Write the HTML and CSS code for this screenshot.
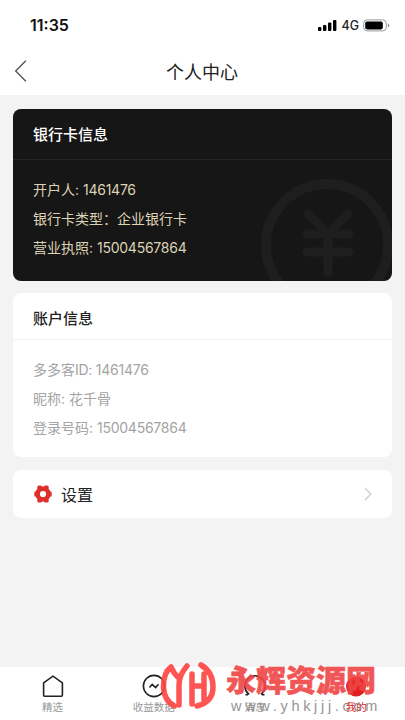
FILE: index.html
```html
<!DOCTYPE html>
<html lang="zh-CN">
<head>
<meta charset="utf-8">
<title>个人中心</title>
<link rel="stylesheet" href="styles.css">
</head>
<body>
<div class="app">
  <header class="top">
    <div class="status">
      <span class="time">11:35</span>
      <span class="indicators">
        <svg width="20" height="13" viewBox="0 0 20 13"><rect x="1" y="8" width="3.4" height="4" rx="1"/><rect x="6" y="6" width="3.4" height="6" rx="1"/><rect x="11" y="3.5" width="3.4" height="8.5" rx="1"/><rect x="16" y="1" width="3.4" height="11" rx="1"/></svg>
        <span class="net">4G</span>
        <svg width="27" height="13" viewBox="0 0 27 13"><rect x=".7" y=".9" width="22.6" height="11" rx="3.4" fill="none" stroke="#999"/><rect x="2.2" y="2.4" width="17.6" height="8" rx="1.8"/><path d="M24.8 4.6q1.5.3 1.5 1.8t-1.5 1.8z" fill="#999"/></svg>
      </span>
    </div>
    <nav class="nav">
      <svg class="back" width="14" height="22" viewBox="0 0 14 22"><path d="M11.800.8 1.700 11l10.100 10.200" fill="none" stroke="#555" stroke-width="1.400"/></svg>
      <h1>个人中心</h1>
    </nav>
  </header>
  <main>
    <section class="card bank">
      <svg class="yen" width="132" height="102" viewBox="0 0 132 102"><g fill="none" stroke="#1e1e1e" stroke-linecap="round"><circle cx="66" cy="66" r="61" stroke-width="10"/><path d="M47 35 67 54 87 35M46 55h42M46 73h42M67 55v39" stroke-width="9"/></g></svg>
      <h2>银行卡信息</h2>
      <div class="rows">
        <p>开户人: <b>1461476</b></p>
        <p>银行卡类型：企业银行卡</p>
        <p>营业执照: <b>15004567864</b></p>
      </div>
    </section>
    <section class="card account">
      <h2>账户信息</h2>
      <div class="rows">
        <p>多多客<b>ID: 1461476</b></p>
        <p>昵称: 花千骨</p>
        <p>登录号码: <b>15004567864</b></p>
      </div>
    </section>
    <section class="card setting">
      <svg width="18" height="18" viewBox="0 0 18 18"><path d="M9 2.600 14.600 5.800v6.400L9 15.400l-5.600-3.200V5.800z" fill="#dc3029" stroke="#dc3029" stroke-width="2.500"/><g fill="#dc3029"><rect x="3.300" y=".4" width="4.800" height="5" rx="1.500"/><rect x="9.900" y=".4" width="4.800" height="5" rx="1.500"/><rect x="3.300" y="12.600" width="4.800" height="5" rx="1.500"/><rect x="9.900" y="12.600" width="4.800" height="5" rx="1.500"/><rect x=".3" y="6.300" width="5" height="5.400" rx="1.500"/><rect x="12.700" y="6.300" width="5" height="5.400" rx="1.500"/></g><circle cx="9" cy="9" r="3.100" fill="#fff"/></svg>
      <span>设置</span>
      <svg class="go" width="8" height="14" viewBox="0 0 8 14"><path d="m1 1 5.800 6L1 13" fill="none" stroke="#d0d0d0" stroke-width="1.500"/></svg>
    </section>
  </main>
  <footer class="tabs">
    <div class="tab"><svg width="24" height="24" viewBox="0 0 24 24"><path d="M2.600 8.800 12 2.200l9.400 6.600v12.400q0 1-1 1H3.600q-1 0-1-1z"/></svg><span>精选</span></div>
    <div class="tab"><svg width="24" height="24" viewBox="0 0 24 24"><circle cx="12" cy="12" r="10.600"/><path d="m7.500 13.500 2.700-3.200 3.400 3.200 2.900-3.200"/></svg><span>收益数据</span></div>
    <div class="tab"><svg width="24" height="24" viewBox="0 0 24 24"><path d="M2.500 20.800h2l1-1A10.200 10.200 0 1 1 18.500 19.800l1 1h2"/></svg><span>消息</span></div>
    <div class="tab active"><svg width="24" height="24" viewBox="0 0 24 24"><circle cx="12" cy="12.500" r="10"/></svg><span>我的</span></div>
  </footer>
  <div class="mark">
    <svg width="60" height="58" viewBox="0 0 60 58"><g fill="none" stroke="#ff4340" stroke-width="5.500" stroke-linecap="round" stroke-linejoin="round"><path d="M13 11Q5 17 5.500 32q1 13 11 18M13 11q3 7 8 11M29 10Q21 19 21 29v20M34 18v30M34 30h12M46 18v26M43 9q12 7 12 22T39 50"/></g></svg>
    <div class="words"><strong>永辉资源网</strong><em>www.yhkjjj.com</em></div>
  </div>
</div>
</body>
</html>
```
FILE: styles.css
```css
* { box-sizing: border-box; margin: 0; padding: 0; }
body { font-family: Inter, "Noto Sans CJK SC", sans-serif; color: #222; }
svg { display: block; flex: none; }
.app { position: relative; width: 405px; height: 720px; overflow: hidden; background: #f3f3f3; display: flex; flex-direction: column; }
.top { height: 95px; background: #fff; }
.status { height: 49px; padding: 1px 15px 0 30px; display: flex; align-items: center; justify-content: space-between; }
.time { font-size: 16px; font-weight: 600; color: #111; }
.indicators { display: flex; align-items: center; gap: 4px; }
.net { font-size: 12.500px; font-weight: 500; }
.nav { height: 44px; display: grid; grid-template-columns: 60px 1fr 60px; align-items: center; }
.back { margin-left: 14px; }
.nav h1 { font-size: 18px; font-weight: 400; text-align: center; line-height: 26px; padding-top: 3px; margin-left: -1px; }
main { flex: 1; padding: 14px 13px 0; }
.card { background: #fff; border-radius: 8px; overflow: hidden; }
.card h2 { height: 47px; padding-left: 20px; font-size: 15px; font-weight: 500; line-height: 52px; border-bottom: 1px solid #f3f3f3; }
.rows { padding: 15px 20px 0; font-size: 14px; line-height: 29.200px; }
.rows b { font-weight: 400; letter-spacing: -.25px; }
.account { height: 164px; margin-top: 12px; }
.account .rows { color: #a4a4a4; }
.bank { position: relative; height: 172px; background: #161616; }
.bank h2 { height: 51px; color: #fff; border-color: #252525; }
.bank .rows { position: relative; color: #ddd2b5; }
.yen { position: absolute; right: -1px; bottom: 0; }
.setting { height: 48px; margin-top: 13px; padding: 0 20px 0 21px; display: flex; align-items: center; gap: 9px; font-size: 16px; }
.go { margin-left: auto; }
.tabs { height: 53px; background: #fff; display: grid; grid-template-columns: repeat(4, 101.200px); padding-left: 2px; }
.tab { display: flex; flex-direction: column; align-items: center; padding-top: 7px; font-size: 10.500px; line-height: 20px; color: #999; }
.tab svg { fill: none; stroke: #222; stroke-width: 1.600; }
.tab.active { color: #e02020; }
.tab.active svg { fill: #e02020; stroke: none; }
.mark { position: absolute; left: 158px; top: 656px; display: flex; gap: 8px; opacity: .9; }
.words { display: flex; flex-direction: column; color: #f04444; }
.words strong { font-size: 30px; line-height: 36px; font-weight: 900; padding-top: 6px; -webkit-text-stroke: .6px #f04444; }
.words em { margin-left: 5px; font: 14.500px/16px "Liberation Sans", sans-serif; letter-spacing: 3.700px; color: #8a8a8a; }
```
